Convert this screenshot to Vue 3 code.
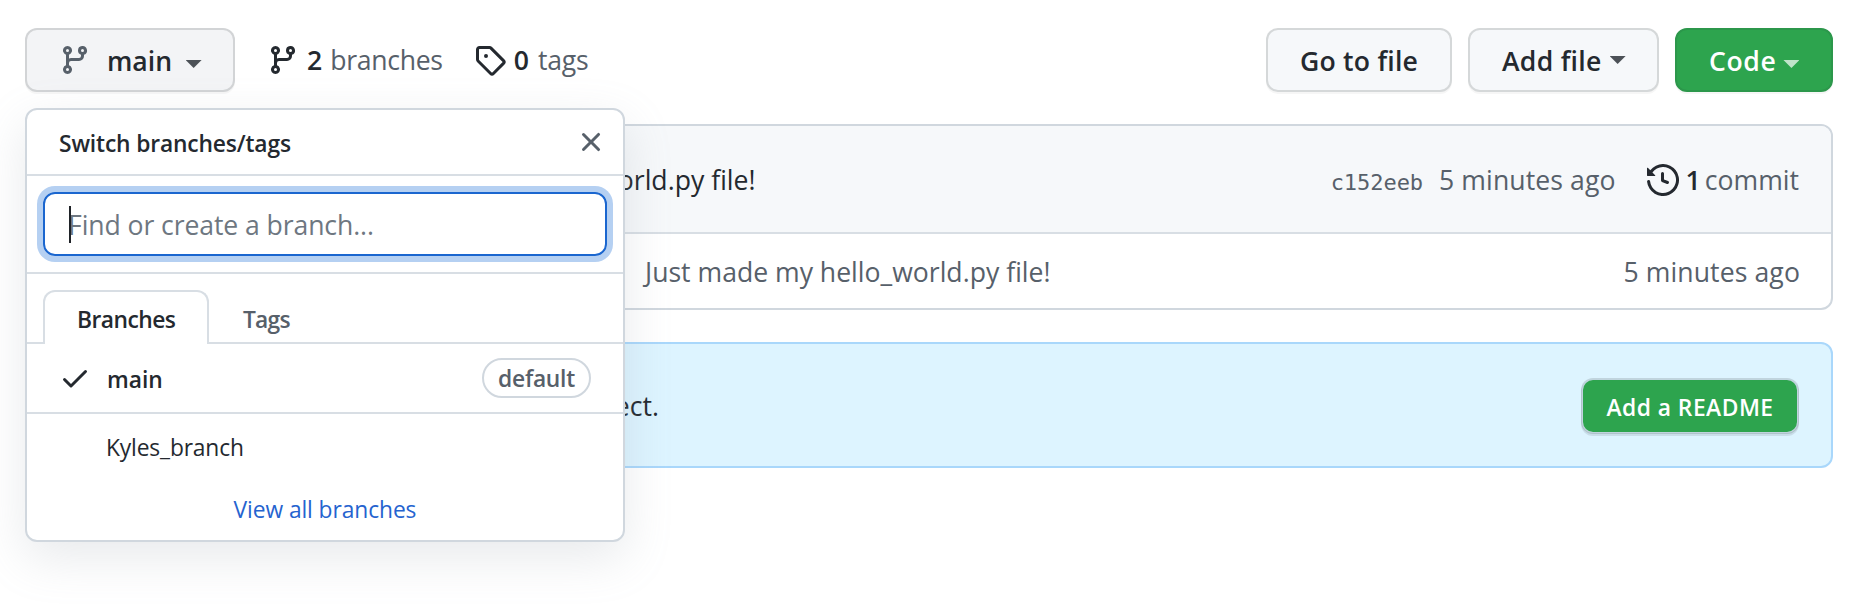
<script setup>
import { h } from 'vue'

const paths = {
  branch: 'M11.75 2.5a.75.75 0 100 1.5.75.75 0 000-1.5zm-2.25.75a2.25 2.25 0 113 2.122V6A2.5 2.5 0 0110 8.5H6a1 1 0 00-1 1v1.128a2.251 2.251 0 11-1.5 0V5.372a2.25 2.25 0 111.5 0v1.836A2.492 2.492 0 016 7h4a1 1 0 001-1v-.628A2.25 2.25 0 019.5 3.25zM4.25 12a.75.75 0 100 1.5.75.75 0 000-1.5zM3.5 3.25a.75.75 0 111.5 0 .75.75 0 01-1.5 0z',
  tag: 'M2.5 7.775V2.75a.25.25 0 01.25-.25h5.025a.25.25 0 01.177.073l6.25 6.25a.25.25 0 010 .354l-5.025 5.025a.25.25 0 01-.354 0l-6.25-6.25a.25.25 0 01-.073-.177zm-1.5 0V2.75C1 1.784 1.784 1 2.75 1h5.025c.464 0 .91.184 1.238.513l6.25 6.25a1.75 1.75 0 010 2.474l-5.026 5.026a1.75 1.75 0 01-2.474 0l-6.25-6.25A1.75 1.75 0 011 7.775zM6 5a1 1 0 100 2 1 1 0 000-2z',
  history: 'M1.643 3.143L.427 1.927A.25.25 0 000 2.104V5.75c0 .138.112.25.25.25h3.646a.25.25 0 00.177-.427L2.715 4.215a6.5 6.5 0 11-1.18 4.458.75.75 0 10-1.493.154 8.001 8.001 0 101.6-5.684zM7.75 4a.75.75 0 01.75.75v2.992l2.028.812a.75.75 0 01-.557 1.392l-2.5-1A.75.75 0 017 8.25v-3.5A.75.75 0 017.75 4z',
  close: 'M3.72 3.72a.75.75 0 011.06 0L8 6.94l3.22-3.22a.75.75 0 111.06 1.06L9.06 8l3.22 3.22a.75.75 0 11-1.06 1.06L8 9.06l-3.22 3.22a.75.75 0 01-1.06-1.06L6.94 8 3.72 4.78a.75.75 0 010-1.06z',
  check: 'M13.78 4.22a.75.75 0 010 1.06l-7.25 7.25a.75.75 0 01-1.06 0L2.22 9.28a.75.75 0 011.06-1.06L6 10.94l6.72-6.72a.75.75 0 011.06 0z',
}

const Icon = (props) =>
  h('svg', { viewBox: '0 0 16 16', width: 32, height: 32, fill: 'currentColor' }, [
    h('path', { 'fill-rule': 'evenodd', d: paths[props.name] }),
  ])
Icon.props = ['name']
</script>

<template>
  <div class="page">
    <header class="toolbar">
      <button class="btn branch-btn">
        <Icon name="branch" class="icon muted" />
        <span>main</span>
        <i class="caret"></i>
      </button>
      <a class="stat branches">
        <Icon name="branch" class="icon" />
        <span class="label"><b>2</b><span class="word">branches</span></span>
      </a>
      <a class="stat tags">
        <Icon name="tag" class="icon" />
        <span class="label"><b>0</b><span class="word">tags</span></span>
      </a>
      <div class="actions">
        <button class="btn goto"><span>Go to file</span></button>
        <button class="btn add"><span>Add file</span><i class="caret"></i></button>
        <button class="btn code"><span>Code</span><i class="caret"></i></button>
      </div>
    </header>

    <section class="files">
      <div class="commit-row">
        <span class="message">Just made my hello_world.py file!</span>
        <span class="sha">c152eeb</span>
        <span class="time">5 minutes ago</span>
        <Icon name="history" class="icon" />
        <span class="commits"><b>1</b><span class="word">commit</span></span>
      </div>
      <div class="file-row">
        <span class="message">Just made my hello_world.py file!</span>
        <span class="time">5 minutes ago</span>
      </div>
    </section>

    <section class="readme">
      <span class="hint">understand your project.</span>
      <button class="readme-btn">Add a README</button>
    </section>

    <div class="menu">
      <div class="menu-head">
        <span class="title">Switch branches/tags</span>
        <Icon name="close" class="icon muted" />
      </div>
      <div class="search">
        <div class="field"><i class="cursor"></i><span>Find or create a branch...</span></div>
      </div>
      <nav class="tabs">
        <span class="tab active">Branches</span>
        <span class="tab">Tags</span>
      </nav>
      <div class="item current">
        <Icon name="check" class="icon" />
        <span class="name">main</span>
        <span class="pill">default</span>
      </div>
      <div class="item other"><span class="name">Kyles_branch</span></div>
      <a class="all">View all branches</a>
    </div>
  </div>
</template>

<style>
body {
  background: #fff;
}
</style>

<style scoped>
.page {
  position: relative;
  box-sizing: border-box;
  width: 1866px;
  height: 609px;
  padding: 28px 33px 0 25px;
  overflow: hidden;
  color: #24292f;
  font: 400 26.6px/40px "Open Sans", "Noto Sans", sans-serif;
  white-space: nowrap;
}
.page * {
  box-sizing: border-box;
}
.icon {
  flex: none;
  display: block;
}
.muted {
  color: #57606a;
}
b {
  font-weight: 600;
}
.toolbar {
  display: flex;
  align-items: center;
  height: 64px;
}
.btn {
  display: flex;
  align-items: center;
  height: 64px;
  padding: 0 0 0 32px;
  border: 2px solid rgba(27, 31, 36, 0.15);
  border-radius: 12px;
  background: #f6f8fa;
  box-shadow: 0 2px 0 rgba(27, 31, 36, 0.04);
  color: #24292f;
  font: 600 26.6px/40px "Open Sans", "Noto Sans", sans-serif;
}
.btn span {
  padding-top: 2px;
}
.caret {
  width: 16px;
  height: 8px;
  background: #4c5157;
  clip-path: polygon(0 0, 100% 0, 50% 100%);
}
.branch-btn {
  width: 210px;
  background: #f3f4f6;
}
.branch-btn span {
  margin: 0 13.5px 0 16px;
}
.branch-btn .caret,
.code .caret {
  margin-top: 8px;
}
.stat {
  display: flex;
  align-items: center;
  margin-left: 32px;
}
.label {
  display: flex;
  padding: 0 0 1px 8px;
}
.label .word {
  margin-left: 8px;
}
.word {
  color: #57606a;
}
.branches .word {
  letter-spacing: -0.3px;
}
.tags {
  margin-left: 31px;
}
.tags .label {
  padding-left: 8px;
}
.tags .word {
  margin-left: 9px;
  letter-spacing: -0.2px;
}
.actions {
  display: flex;
  gap: 16px;
  margin-left: auto;
}
.goto {
  width: 186px;
  letter-spacing: 0.22px;
}
.add {
  width: 191px;
  letter-spacing: 0.28px;
}
.add .caret {
  margin-left: 8px;
}
.code {
  width: 158px;
  border-color: #2c974b;
  background: #2da44e;
  color: #fff;
  letter-spacing: 0.62px;
}
.code .caret {
  margin-left: 7px;
  background: #c0e4ca;
}
.files {
  height: 186px;
  margin-top: 32px;
  border: 2px solid #d0d7de;
  border-radius: 12px;
  overflow: hidden;
}
.commit-row {
  display: flex;
  align-items: center;
  height: 108px;
  padding: 2px 32px 0 323px;
  border-bottom: 2px solid #d8dee4;
  background: #f6f8fa;
}
.sha {
  margin-left: auto;
  padding-top: 5px;
  color: #57606a;
  font: 22px/40px "DejaVu Sans Mono", "Liberation Mono", monospace;
  letter-spacing: -0.05px;
}
.time {
  color: #57606a;
  letter-spacing: 0.1px;
}
.commit-row .time {
  margin: 0 31px 0 16px;
}
.commits {
  display: flex;
  margin-left: 7px;
}
.commits .word {
  margin-left: 4px;
}
.file-row {
  display: flex;
  align-items: center;
  justify-content: space-between;
  height: 76px;
  padding: 0 31px 0 618px;
  color: #57606a;
}
.readme {
  display: flex;
  align-items: center;
  justify-content: space-between;
  height: 126px;
  margin-top: 32px;
  padding: 2px 32px 0 0;
  border: 2px solid #a9d7fb;
  border-radius: 12px;
  background: #ddf4ff;
}
.hint {
  width: 632px;
  text-align: right;
}
.readme-btn {
  width: 218px;
  height: 56px;
  padding: 3px 0 0;
  border: 2px solid rgba(27, 31, 36, 0.15);
  border-radius: 12px;
  background: #2da44e;
  background-clip: padding-box;
  box-shadow: 0 2px 0 rgba(27, 31, 36, 0.1);
  color: #fff;
  font: 600 22.8px/36px "Open Sans", "Noto Sans", sans-serif;
  letter-spacing: 0.49px;
}
.menu {
  position: absolute;
  top: 108px;
  left: 25px;
  width: 600px;
  height: 434px;
  border: 2px solid #d0d7de;
  border-radius: 12px;
  background: #fff;
  box-shadow: 0 16px 48px rgba(140, 149, 159, 0.2);
  font-size: 22.8px;
  line-height: 36px;
}
.menu-head {
  display: flex;
  align-items: center;
  justify-content: space-between;
  height: 66px;
  padding: 0 16px 0 32px;
  border-bottom: 2px solid #d8dee4;
}
.title {
  padding-top: 3px;
  font-weight: 600;
  letter-spacing: -0.15px;
}
.search {
  height: 98px;
  padding: 16px;
  border-bottom: 2px solid #d8dee4;
}
.field {
  position: relative;
  display: flex;
  align-items: center;
  height: 64px;
  padding: 2px 0 0 23px;
  border: 2px solid #1a66cf;
  border-radius: 12px;
  box-shadow: 0 0 0 6px #b5d0f2;
  color: #6e7781;
  font-size: 26.6px;
  letter-spacing: -0.09px;
}
.cursor {
  position: absolute;
  top: 12px;
  left: 24px;
  width: 2px;
  height: 37px;
  background: #1f2328;
}
.tabs {
  display: flex;
  align-items: flex-end;
  height: 70px;
  padding-left: 16px;
  box-shadow: inset 0 -2px #d8dee4;
  font-weight: 600;
}
.tab {
  height: 54px;
  padding: 12px 32px 0 34px;
  color: #57606a;
  letter-spacing: -0.78px;
}
.tab.active {
  width: 166px;
  padding: 10px 0 0 32px;
  border: 2px solid #d8dee4;
  border-bottom: 0;
  border-radius: 12px 12px 0 0;
  background: #fff;
  color: #24292f;
  letter-spacing: -0.54px;
}
.item {
  display: flex;
  align-items: center;
}
.current {
  height: 70px;
  padding: 0 32px;
  border-bottom: 2px solid #d8dee4;
  font-weight: 600;
}
.current .name {
  margin-left: 16px;
  padding-top: 3px;
}
.pill {
  height: 40px;
  width: 109px;
  margin-left: auto;
  padding-top: 1px;
  border: 2px solid #d0d7de;
  border-radius: 20px;
  color: #57606a;
  text-align: center;
  letter-spacing: -0.27px;
}
.other {
  height: 66px;
  padding: 2px 0 0 79px;
  letter-spacing: -0.15px;
}
.all {
  display: block;
  padding-top: 12px;
  color: #2563cf;
  text-align: center;
  letter-spacing: -0.09px;
}
</style>
